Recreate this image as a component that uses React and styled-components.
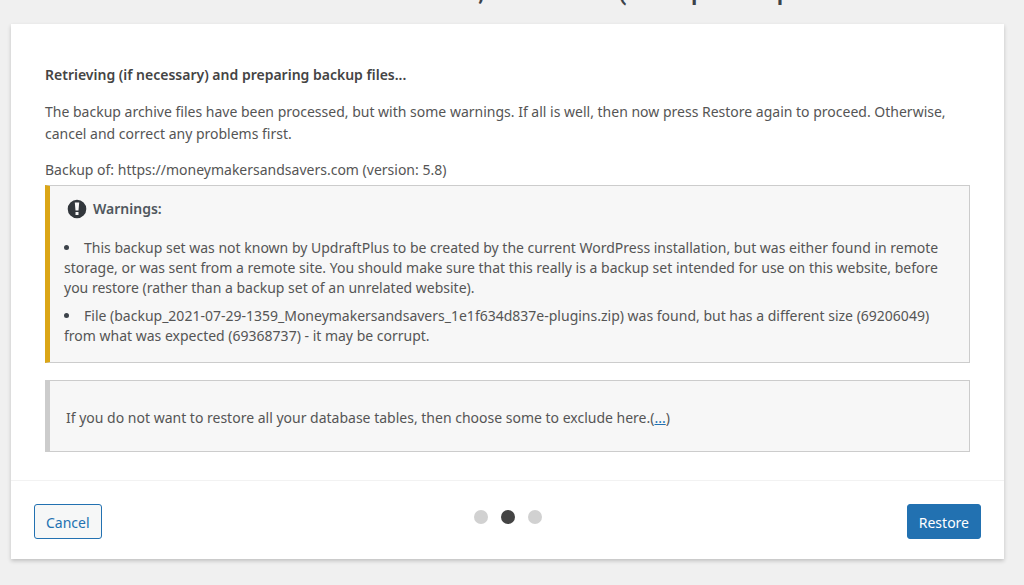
import React from "react";
import styled, { createGlobalStyle } from "styled-components";

const GlobalStyle = createGlobalStyle`
  * {
    box-sizing: border-box;
  }

  body {
    margin: 0;
    overflow: hidden;
    background-color: #f0f0f0;
    color: #555;
    font-family: "Noto Sans", "Open Sans", sans-serif;
    font-size: 14px;
    line-height: 22px;
  }
`;

const StyledPage = styled.div`
  padding: 0 20px 26px 11px;
`;

// the page title sits mostly above the fold
const StyledTitle = styled.h1`
  height: 24px;
  margin: 0;
  display: flex;
  justify-content: center;
  align-items: flex-end;
  overflow: hidden;
  color: #3c434a;
  font-family: Roboto, sans-serif;
  font-size: 24px;
  font-weight: 600;
  line-height: 24px;
  white-space: nowrap;
  padding-bottom: 20px;
`;

const StyledCard = styled.main`
  background-color: #fff;
  box-shadow: 0 2px 4px rgba(0, 0, 0, 0.2);
`;

const StyledContent = styled.div`
  padding: 40px 34px 28px;
`;

const StyledHeading = styled.h2`
  margin: 0 0 15px;
  color: #444;
  font-size: 14px;
  font-weight: 600;
  line-height: 22px;
`;

const StyledText = styled.p`
  margin: 0 0 ${(props) => props.$gap || "0"};
`;

const StyledNotice = styled.section`
  background-color: #f7f7f7;
  border: 1px solid #ccc;
  border-left: 5px solid ${(props) => props.$accent};
  padding: ${(props) => props.$padding};

  & + & {
    margin-top: 17px;
  }
`;

const StyledNoticeTitle = styled.h3`
  display: flex;
  align-items: center;
  gap: 6px;
  margin: 0 0 19px;
  padding-left: 3px;
  color: #50575e;
  font-size: 14px;
  font-weight: 600;
  line-height: 20px;
`;

const StyledWarningIcon = styled.svg`
  width: 20px;
  height: 20px;
  fill: #32373c;
`;

const StyledWarningList = styled.ul`
  margin: 0;
  padding: 0;
  list-style: disc inside;
  line-height: 20px;
`;

const StyledWarning = styled.li`
  margin-bottom: 8px;

  &::marker {
    color: #3c434a;
  }
`;

const StyledLink = styled.a`
  color: #2271b1;
`;

const StyledFooter = styled.footer`
  display: grid;
  grid-template-columns: 1fr auto 1fr;
  align-items: center;
  border-top: 1px solid #f2f2f2;
  padding: 23px 23px 20px;
`;

const StyledSteps = styled.ol`
  display: flex;
  gap: 13px;
  margin: 0 0 10px;
  padding: 0;
  list-style: none;
`;

const StyledStep = styled.li`
  width: 14px;
  height: 14px;
  border-radius: 50%;
  background-color: ${(props) => (props.$active ? "#444" : "#d1d1d1")};
`;

const StyledButton = styled.button`
  justify-self: ${(props) => (props.$primary ? "end" : "start")};
  height: 35px;
  padding: 2px 11px 0;
  border: 1px solid #2271b1;
  border-radius: 3px;
  background-color: ${(props) => (props.$primary ? "#2271b1" : "#f6f7f7")};
  color: ${(props) => (props.$primary ? "#fff" : "#2271b1")};
  font-family: inherit;
  font-size: 14px;
  cursor: pointer;
`;

const warnings = [
  "This backup set was not known by UpdraftPlus to be created by the current WordPress installation, but was either found in remote storage, or was sent from a remote site. You should make sure that this really is a backup set intended for use on this website, before you restore (rather than a backup set of an unrelated website).",
  "File (backup_2021-07-29-1359_Moneymakersandsavers_1e1f634d837e-plugins.zip) was found, but has a different size (69206049) from what was expected (69368737) - it may be corrupt.",
];

const steps = ["Components", "Verifications", "Restoration"];

function App() {
  return (
    <>
      <GlobalStyle />
      <StyledPage>
        <StyledTitle>
          Restored files from: Jul 29, 2021 13:59 (backup set import
        </StyledTitle>
        <StyledCard>
          <StyledContent>
            <StyledHeading>
              Retrieving (if necessary) and preparing backup files...
            </StyledHeading>
            <StyledText $gap="14px">
              The backup archive files have been processed, but with some
              warnings. If all is well, then now press Restore again to proceed.
              Otherwise, cancel and correct any problems first.
            </StyledText>
            <StyledText $gap="4px">
              Backup of: https://moneymakersandsavers.com (version: 5.8)
            </StyledText>
            <StyledNotice $accent="#dba617" $padding="13px 14px 8px">
              <StyledNoticeTitle>
                <StyledWarningIcon viewBox="0 0 20 20" aria-hidden="true">
                  <path
                    fillRule="evenodd"
                    d="M10 .7a9.3 9.3 0 1 1 0 18.6a9.3 9.3 0 0 1 0-18.6zM7.8 3.6l.7 8h3l.7-8zM8.5 13v3h3v-3z"
                  />
                </StyledWarningIcon>
                Warnings:
              </StyledNoticeTitle>
              <StyledWarningList>
                {warnings.map((warning) => (
                  <StyledWarning key={warning}>{warning}</StyledWarning>
                ))}
              </StyledWarningList>
            </StyledNotice>
            <StyledNotice $accent="#ccc" $padding="26px 16px 22px">
              <StyledText>
                If you do not want to restore all your database tables, then
                choose some to exclude here.(<StyledLink href="#tables">...</StyledLink>)
              </StyledText>
            </StyledNotice>
          </StyledContent>
          <StyledFooter>
            <StyledButton type="button">Cancel</StyledButton>
            <StyledSteps>
              {steps.map((step) => (
                <StyledStep
                  key={step}
                  aria-label={step}
                  $active={step === "Verifications"}
                />
              ))}
            </StyledSteps>
            <StyledButton type="button" $primary>
              Restore
            </StyledButton>
          </StyledFooter>
        </StyledCard>
      </StyledPage>
    </>
  );
}

export default App;
